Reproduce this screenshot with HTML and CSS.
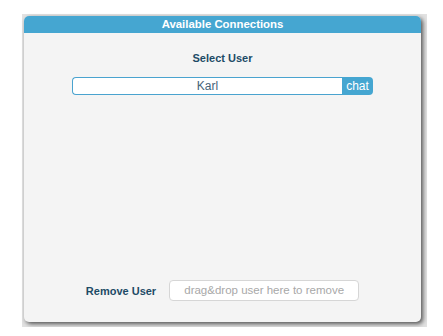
FILE: index.html
```html
<!DOCTYPE html>
<html lang="en">
<head>
    <meta charset="UTF-8">
    <meta name="viewport" content="width=device-width, initial-scale=1.0">
    <title>Available Connections</title>
    <link rel="stylesheet" href="styles.css">
</head>
<body>
    <!-- connections panel -->
    <div class="frame">
        <section class="panel">
            <div class="panel-title">Available Connections</div>
            <div class="panel-body">
                <div class="select-label">Select User</div>
                <div class="select-row">
                    <input type="text" class="user-input" value="Karl">
                    <button class="chat-btn" type="button">chat</button>
                </div>
                <div class="spacer"></div>
                <div class="remove-row">
                    <span class="remove-label">Remove User</span>
                    <div class="dropzone">drag&amp;drop user here to remove</div>
                </div>
            </div>
        </section>
    </div>
</body>
</html>
```

FILE: styles.css
```css
body {
    font-family: "Liberation Sans", Arial, sans-serif;
    margin: 0;
    padding: 0;
    background-color: #ffffff;
}

.frame {
    margin: 14px 0 0 22px;
    width: 405px;
    height: 313px;
    box-sizing: border-box;
    padding: 2px 6px 5px 2px;
    background-color: #e2e2e2;
}

.panel {
    height: 100%;
    display: flex;
    flex-direction: column;
    background-color: #f4f4f4;
    border-radius: 5px;
    box-shadow: 2px 2px 4px #555555;
    overflow: hidden;
}

.panel-title {
    height: 17px;
    line-height: 17px;
    background-color: #45a6d1;
    color: #ffffff;
    font-size: 11.4px;
    font-weight: bold;
    text-align: center;
}

.panel-body {
    flex: 1;
    display: flex;
    flex-direction: column;
    align-items: center;
    padding: 19px 0 21px;
}

.select-label {
    font-size: 11px;
    font-weight: bold;
    color: #1d4b66;
    line-height: 13px;
}

.select-row {
    display: flex;
    margin-top: 12px;
    height: 18px;
}

.user-input {
    width: 270px;
    height: 18px;
    box-sizing: border-box;
    border: 1px solid #4aa3cf;
    border-right: none;
    border-radius: 4px 0 0 4px;
    background-color: #ffffff;
    font-family: "Liberation Sans", Arial, sans-serif;
    font-size: 12px;
    color: #466479;
    text-align: center;
    padding: 0;
    outline: none;
}

.chat-btn {
    width: 31px;
    height: 18px;
    border: none;
    border-radius: 0 4px 4px 0;
    background-color: #45a6d1;
    color: #ffffff;
    font-family: "Liberation Sans", Arial, sans-serif;
    font-size: 12px;
    padding: 0;
}

.spacer {
    flex: 1;
}

.remove-row {
    display: flex;
    align-items: center;
    gap: 13px;
}

.remove-label {
    font-size: 11px;
    font-weight: bold;
    color: #1d4b66;
}

.dropzone {
    width: 190px;
    height: 21px;
    box-sizing: border-box;
    border: 1px solid #d6d6d6;
    border-radius: 4px;
    background-color: #ffffff;
    color: #a8a8a8;
    font-size: 11.5px;
    line-height: 19px;
    text-align: center;
}
```
